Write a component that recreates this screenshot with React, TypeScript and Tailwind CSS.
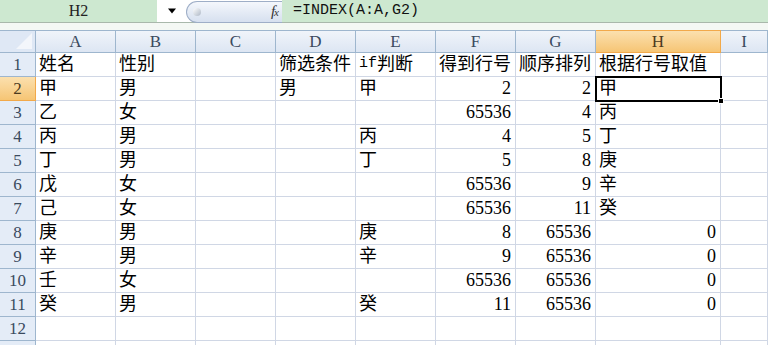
import React from "react";

const cols = ["A", "B", "C", "D", "E", "F", "G", "H", "I"];

type Cell = string | number;

const rows: Cell[][] = [
  ["姓名", "性别", "", "筛选条件", "if判断", "得到行号", "顺序排列", "根据行号取值"],
  ["甲", "男", "", "男", "甲", 2, 2, "甲"],
  ["乙", "女", "", "", "", 65536, 4, "丙"],
  ["丙", "男", "", "", "丙", 4, 5, "丁"],
  ["丁", "男", "", "", "丁", 5, 8, "庚"],
  ["戊", "女", "", "", "", 65536, 9, "辛"],
  ["己", "女", "", "", "", 65536, 11, "癸"],
  ["庚", "男", "", "", "庚", 8, 65536, 0],
  ["辛", "男", "", "", "辛", 9, 65536, 0],
  ["壬", "女", "", "", "", 65536, 65536, 0],
  ["癸", "男", "", "", "癸", 11, 65536, 0],
  [],
  [],
];

const font = { fontFamily: '"Liberation Serif", "Noto Sans CJK SC", serif' };
const mono = { fontFamily: '"Liberation Mono", "Noto Sans CJK SC", monospace' };

function CellText({ v }: { v: Cell | undefined }) {
  if (v === undefined || v === "") return null;
  if (v === "if判断")
    return (
      <>
        <span style={mono} className="text-[15px]">if</span>判断
      </>
    );
  return <>{String(v)}</>;
}

export default function App() {
  return (
    <div className="w-[768px] h-[345px] overflow-hidden bg-white text-black" style={font}>
      {/* Formula bar */}
      <div className="flex h-[23px] bg-[#cde8d0] border-b border-[#a9b8ab]">
        <div className="w-[157px] flex items-center justify-center text-[16px] text-[#222]">H2</div>
        <div className="w-[125px] bg-white flex items-center">
          <svg className="ml-[10px] w-[10px] h-[6px]" viewBox="0 0 10 6">
            <path d="M1 0.5h8L5 5.5z" fill="#000" />
          </svg>
          <div className="ml-[9px] flex-1 h-[22px] mt-[1px] rounded-l-full border border-[#9eaec7] border-r-0 bg-gradient-to-b from-[#f4f7fc] to-[#d6e0ef] flex items-center justify-between pr-[4px]">
            <div className="ml-[6px] w-[8px] h-[8px] rounded-full bg-gradient-to-br from-[#ffffff] to-[#aeb8c6]" />
            <span className="italic text-[15px] text-[#333] tracking-[-1px]">
              f<span className="text-[11px]">x</span>
            </span>
          </div>
        </div>
        <div className="flex-1 flex items-center pl-[11px] text-[15px] text-[#111]" style={mono}>
          =INDEX(A:A,G2)
        </div>
      </div>
      <div className="h-[7px] bg-[#f4f8f4]" />

      {/* Sheet */}
      <div className="relative grid grid-cols-[36px_80px_80px_80px_80px_80px_80px_80px_125px_1fr]">
        {/* column header */}
        <div className="h-[23px] border-r border-b border-t border-[#9eb6ce] bg-[#dfe8f5] relative overflow-hidden">
          <div className="absolute right-[3px] bottom-[3px] w-0 h-0 border-l-[16px] border-l-transparent border-b-[16px] border-b-[#f3f6fb]" />
        </div>
        {cols.map((c) => (
          <div
            key={c}
            className={
              c === "H"
                ? "h-[23px] border-r border-b border-t border-[#f2a94a] bg-gradient-to-b from-[#fbe0ae] to-[#f6c574] flex items-center justify-center text-[17px] text-[#4b3a1e]"
                : "h-[23px] border-r border-b border-t border-[#9eb6ce] bg-gradient-to-b from-[#f0f4fa] to-[#dde6f3] flex items-center justify-center text-[17px] text-[#3a4a5e]"
            }
          >
            {c}
          </div>
        ))}

        {rows.map((r, ri) => (
          <React.Fragment key={ri}>
            <div
              className={
                ri === 1
                  ? "h-[24px] border-r border-b border-[#f2a94a] bg-gradient-to-b from-[#fbe0ae] to-[#f6c574] flex items-center justify-center text-[17px] text-[#4b3a1e]"
                  : "h-[24px] border-r border-b border-[#9eb6ce] bg-[#e4ecf7] flex items-center justify-center text-[17px] text-[#3a4a5e]"
              }
            >
              {ri < 12 ? ri + 1 : ""}
            </div>
            {cols.map((c, ci) => {
              const v = r[ci];
              const num = typeof v === "number";
              return (
                <div
                  key={c}
                  className={
                    num
                      ? "h-[24px] border-r border-b border-[#d0d7e5] flex items-center justify-end pr-[4px] text-[18px] whitespace-nowrap overflow-hidden"
                      : "h-[24px] border-r border-b border-[#d0d7e5] flex items-center pl-[3px] text-[18px] whitespace-nowrap overflow-hidden"
                  }
                >
                  <CellText v={v} />
                </div>
              );
            })}
          </React.Fragment>
        ))}

        {/* active cell H2 */}
        <div className="absolute left-[595px] top-[46px] w-[127px] h-[26px] border-[2px] border-black pointer-events-none">
          <div className="absolute -right-[4px] -bottom-[4px] w-[6px] h-[6px] bg-black border border-white" />
        </div>
      </div>
    </div>
  );
}
